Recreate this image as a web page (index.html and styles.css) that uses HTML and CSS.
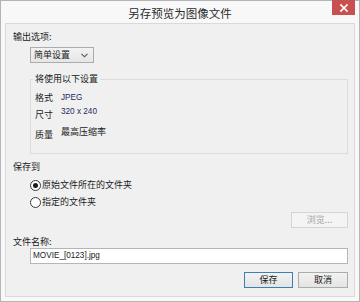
FILE: index.html
```html
<!DOCTYPE html>
<html lang="zh">
<head>
<meta charset="utf-8">
<title>另存预览为图像文件</title>
<link rel="stylesheet" href="styles.css">
</head>
<body>
<div class="window">
  <div class="titlebar">
    <span class="title">另存预览为图像文件</span>
    <span class="close"><svg width="8" height="8" viewBox="0 0 8 8"><path d="M1 1L7 7M7 1L1 7" stroke="#fff" stroke-width="1.6" stroke-linecap="square"/></svg></span>
  </div>
  <div class="panel">
    <div class="label first">输出选项:</div>
    <div class="select"><span>简单设置</span><svg class="chev" width="7" height="5" viewBox="0 0 7 5"><path d="M0.5 0.8L3.5 3.8L6.5 0.8" fill="none" stroke="#555" stroke-width="1.1"/></svg></div>
    <fieldset class="group">
      <legend>将使用以下设置</legend>
      <div class="row r1"><span class="k">格式</span><span class="v lat">JPEG</span></div>
      <div class="row r2"><span class="k">尺寸</span><span class="v lat">320 x 240</span></div>
      <div class="row r3"><span class="k">质量</span><span class="v">最高压缩率</span></div>
    </fieldset>
    <div class="label save">保存到</div>
    <div class="radio r-a"><span class="dot on"></span><span>原始文件所在的文件夹</span></div>
    <div class="radio r-b"><span class="dot"></span><span>指定的文件夹</span></div>
    <div class="browse-row"><span class="btn disabled browse">浏览...</span></div>
    <div class="label fname">文件名称:</div>
    <div class="input"><span class="lat">MOVIE_[0123].jpg</span></div>
    <div class="actions">
      <span class="btn default ok">保存</span>
      <span class="btn cancel">取消</span>
    </div>
  </div>
</div>
</body>
</html>
```

FILE: styles.css
```css
* { box-sizing: border-box; }
html, body { margin: 0; padding: 0; }
body {
  width: 360px;
  height: 302px;
  background: #ffffff;
  font-family: "Noto Sans CJK SC", "Liberation Sans", sans-serif;
  font-size: 9px;
  line-height: 12px;
  color: #1a1a1a;
}
.lat {
  font-family: "Liberation Sans", "Noto Sans CJK SC", sans-serif;
  font-size: 8.2px;
}
.window {
  width: 360px;
  height: 302px;
  border: 1px solid #b4b4b4;
  background: #f8f8f8;
  display: flex;
  flex-direction: column;
  padding: 0 4px 4px 4px;
}
.titlebar {
  height: 22px;
  display: grid;
  grid-template-columns: 1fr auto 1fr;
  align-items: start;
}
.title {
  grid-column: 2;
  font-size: 11.5px;
  line-height: 14px;
  margin-top: 5px;
  color: #2b2b2b;
}
.close {
  grid-column: 3;
  justify-self: end;
  width: 23px;
  height: 15px;
  margin-top: -1px;
  background: #c75050;
  display: flex;
  align-items: center;
  justify-content: center;
}
.close svg { display: block; }
.panel {
  flex: 1;
  border: 1px solid #d9d9d9;
  background: #f0f0f0;
  display: flex;
  flex-direction: column;
  align-items: flex-start;
  padding: 0 6px 8px 0;
}
.label { margin-left: 7px; height: 12px; }
.label.first { margin-top: 7px; }
.select {
  margin-top: 4px;
  margin-left: 24px;
  width: 64px;
  height: 16px;
  border: 1px solid #acacac;
  background: linear-gradient(#f2f2f2, #e6e6e6);
  display: flex;
  align-items: center;
  justify-content: space-between;
  padding: 0 5px 0 3px;
  line-height: 12px;
}
.chev { display: block; }
.group {
  margin: 10px 0 0 24px;
  align-self: stretch;
  border: 1px solid #dcdcdc;
  padding: 0 0 12px 4px;
  min-width: 0;
}
.group legend {
  margin-left: -2px;
  padding: 0 2px;
  line-height: 12px;
  color: #222;
}
.row { display: flex; align-items: flex-start; }
.row .k { width: 26px; flex: none; }
.r1 { margin-top: 7px; }
.r2 { margin-top: 2px; }
.r3 { margin-top: 5px; }
.r2 .k, .r3 .k { margin-top: 3px; }
.v.lat { color: #1e2c5e; }
.label.save { margin-top: 7px; }
.radio {
  margin-left: 24px;
  display: flex;
  align-items: center;
  gap: 1px;
  height: 12px;
}
.r-a { margin-top: 6px; }
.r-b { margin-top: 5px; }
.dot {
  width: 11px;
  height: 11px;
  border: 1px solid #3a3a3a;
  border-radius: 50%;
  background: #fff;
  display: flex;
  align-items: center;
  justify-content: center;
  flex: none;
}
.dot.on::after {
  content: "";
  width: 5px;
  height: 5px;
  border-radius: 50%;
  background: #1a1a1a;
}
.browse-row {
  align-self: stretch;
  display: flex;
  justify-content: flex-end;
  margin-top: 4px;
}
.btn {
  height: 16px;
  display: flex;
  align-items: center;
  justify-content: center;
  border: 1px solid #acacac;
  background: linear-gradient(#f2f2f2, #e4e4e4);
  line-height: 12px;
}
.btn.browse { width: 57px; }
.btn.disabled {
  border-color: #d5d5d5;
  background: #f4f4f4;
  color: #a3a3a3;
}
.label.fname { margin-top: 8px; }
.input {
  align-self: stretch;
  margin-left: 24px;
  height: 16px;
  border: 1px solid #b5b5b5;
  background: #fff;
  padding-left: 2px;
  display: flex;
  align-items: center;
}
.actions {
  align-self: stretch;
  display: flex;
  justify-content: flex-end;
  gap: 5px;
  margin-top: 8px;
}
.btn.ok { width: 49px; border-color: #3c7fb1; }
.btn.cancel { width: 50px; }
```
